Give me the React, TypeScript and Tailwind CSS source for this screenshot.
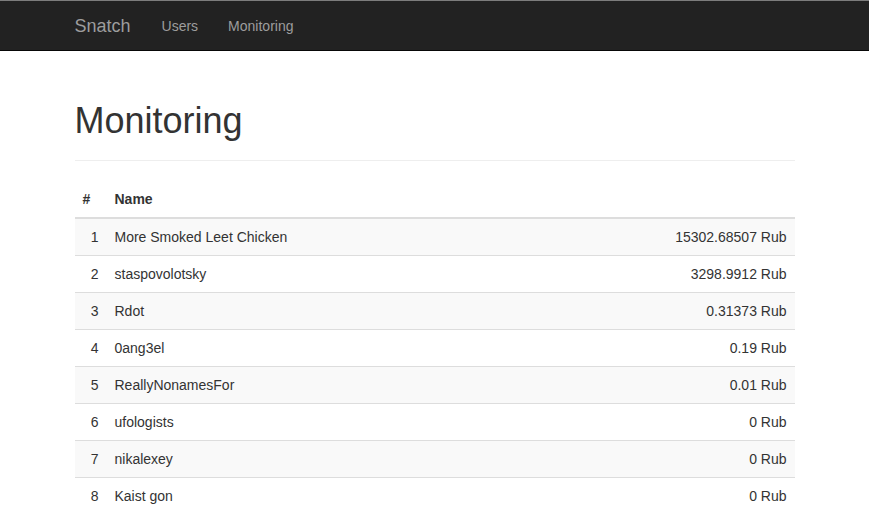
const rows: Array<[number, string, string]> = [
  [1, "More Smoked Leet Chicken", "15302.68507 Rub"],
  [2, "staspovolotsky", "3298.9912 Rub"],
  [3, "Rdot", "0.31373 Rub"],
  [4, "0ang3el", "0.19 Rub"],
  [5, "ReallyNonamesFor", "0.01 Rub"],
  [6, "ufologists", "0 Rub"],
  [7, "nikalexey", "0 Rub"],
  [8, "Kaist gon", "0 Rub"],
]

export default function App() {
  return (
    <div className="min-h-screen bg-white text-[#333] text-[14px] leading-[20px] font-['Liberation_Sans',Arial,sans-serif]">
      {/* Navbar */}
      <nav className="h-[51px] bg-[#222] border-t border-t-[#7d7d7d] border-b border-b-[#080808]">
        <div className="w-[750px] mx-auto px-[15px] flex items-center h-full">
          <a className="text-[18px] leading-[20px] text-[#9d9d9d] pr-[16px] py-[15px]">Snatch</a>
          <a className="text-[#9d9d9d] px-[15px] py-[15px]">Users</a>
          <a className="text-[#9d9d9d] px-[15px] py-[15px]">Monitoring</a>
        </div>
      </nav>

      {/* Content */}
      <div className="w-[750px] mx-auto px-[15px]">
        <div className="mt-[50px] mb-[20px] pb-[9px] border-b border-[#eee]">
          <h1 className="text-[36px] leading-[39.6px] font-medium mb-[10px]">Monitoring</h1>
        </div>
        <table className="w-full border-collapse table-fixed">
          <thead>
            <tr className="border-b-2 border-[#ddd]">
              <th className="w-[32px] p-2 text-left font-bold">#</th>
              <th className="p-2 text-left font-bold">Name</th>
              <th className="p-2"></th>
            </tr>
          </thead>
          <tbody>
            {rows.map(([n, name, value]) => (
              <tr key={n} className={`border-t border-[#ddd] ${n % 2 === 1 ? "bg-[#f9f9f9]" : ""}`}>
                <td className="p-2 text-right">{n}</td>
                <td className="p-2">{name}</td>
                <td className="p-2 text-right">{value}</td>
              </tr>
            ))}
          </tbody>
        </table>
      </div>
    </div>
  )
}
